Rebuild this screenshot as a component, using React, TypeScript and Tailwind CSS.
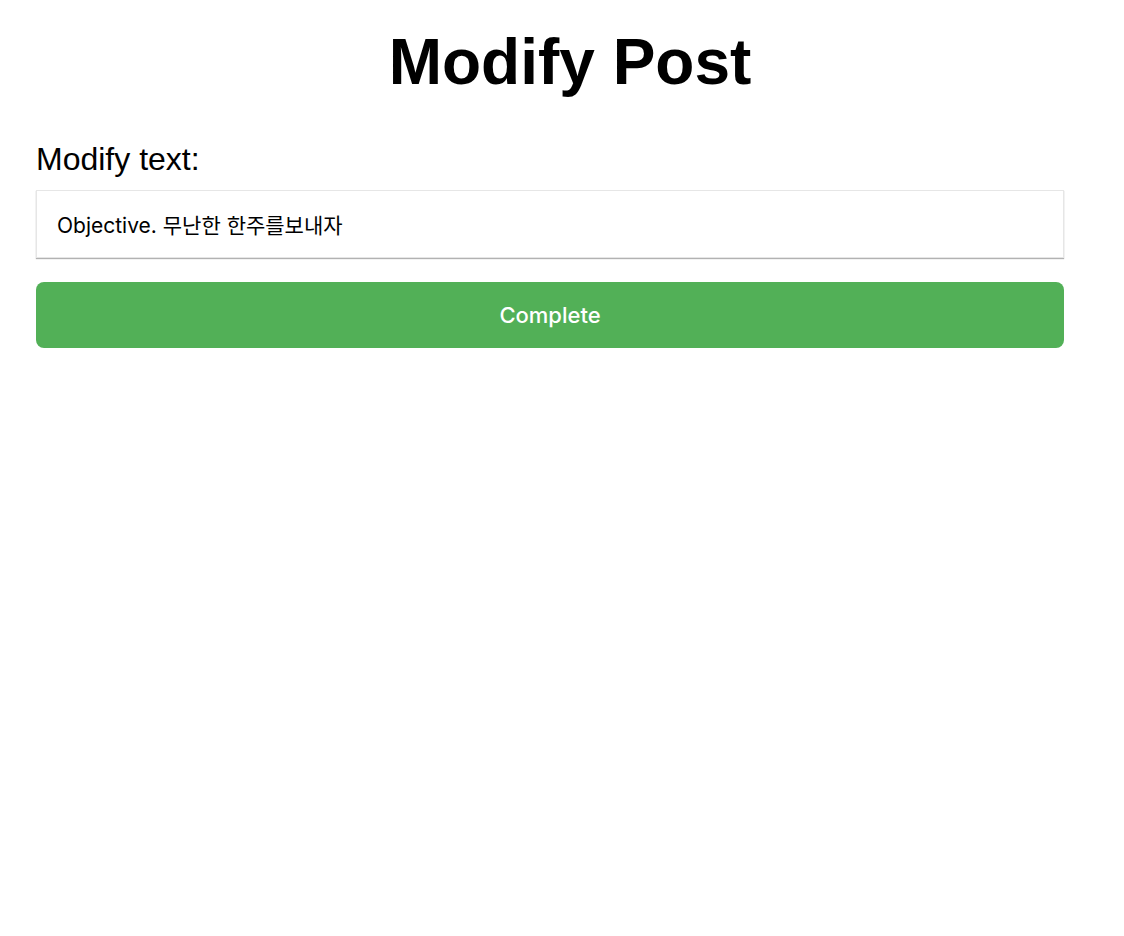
import React, { useState } from "react";

const ModifyPost = () => {
  const [text, setText] = useState("Objective. 무난한 한주를보내자");

  return (
    <div className="w-full min-h-screen bg-white font-['Liberation_Sans',Arial,sans-serif] text-black">
      <h1 className="pt-[25px] pl-4 text-center text-[64px] leading-[74px] font-bold">
        Modify Post
      </h1>

      <div className="mt-[42px] ml-9 w-[1028px] flex flex-col">
        <label className="text-[32px] leading-[37px]">Modify text:</label>

        <input
          value={text}
          onChange={(e) => setText(e.target.value)}
          className="mt-3 h-[68px] w-full px-5 border border-[#e6e6e6] shadow-[0_1px_1px_rgba(0,0,0,0.3)] outline-none text-[21px] font-['Inter','Noto_Sans_CJK_KR',sans-serif]"
        />

        <button className="mt-6 h-[66px] w-full rounded-lg bg-[#52b057] text-white text-[22px] font-medium font-['Inter',sans-serif]">
          Complete
        </button>
      </div>
    </div>
  );
};

export default ModifyPost;
